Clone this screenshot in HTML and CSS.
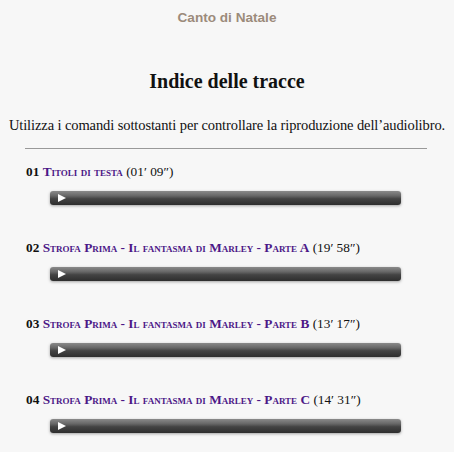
FILE: index.html
```html
<!DOCTYPE html>
<html lang="it">
<head>
<meta charset="utf-8">
<title>Canto di Natale</title>
<link rel="stylesheet" href="styles.css">
</head>
<body>
<header class="topbar">Canto di Natale</header>
<main class="content">
  <h1 class="title">Indice delle tracce</h1>
  <p class="intro">Utilizza i comandi sottostanti per controllare la riproduzione dell’audiolibro.</p>
  <hr class="rule">
  <ul class="tracks">
    <li class="track">
      <p class="track-label"><b>01</b> <span class="track-name">Titoli di testa</span> (01′ 09″)</p>
      <div class="player"><span class="play"></span></div>
    </li>
    <li class="track">
      <p class="track-label"><b>02</b> <span class="track-name">Strofa Prima - Il fantasma di Marley - Parte A</span> (19′ 58″)</p>
      <div class="player"><span class="play"></span></div>
    </li>
    <li class="track">
      <p class="track-label"><b>03</b> <span class="track-name">Strofa Prima - Il fantasma di Marley - Parte B</span> (13′ 17″)</p>
      <div class="player"><span class="play"></span></div>
    </li>
    <li class="track">
      <p class="track-label"><b>04</b> <span class="track-name">Strofa Prima - Il fantasma di Marley - Parte C</span> (14′ 31″)</p>
      <div class="player"><span class="play"></span></div>
    </li>
  </ul>
</main>
</body>
</html>
```
FILE: styles.css
```css
html, body {
  margin: 0;
  padding: 0;
  background: #f7f7f7;
}
body {
  font-family: "Liberation Serif", "DejaVu Serif", serif;
  color: #111;
}
.topbar {
  font-family: "Liberation Sans", Arial, sans-serif;
  font-weight: bold;
  font-size: 13.6px;
  color: #9c8b7b;
  text-align: center;
  padding-top: 9px;
  height: 26px;
  line-height: 17px;
}
.content {
  padding: 0;
}
.title {
  margin: 34px 0 0;
  font-size: 20px;
  font-weight: bold;
  text-align: center;
  line-height: 24px;
}
.intro {
  margin: 23px 0 0;
  font-size: 14.5px;
  letter-spacing: -0.1px;
  line-height: 18px;
  text-align: center;
  white-space: nowrap;
}
.rule {
  margin: 14px 27px 0 25px;
  border: 0;
  border-top: 1px solid #999;
  height: 0;
}
.tracks {
  list-style: none;
  margin: 0;
  padding: 15px 0 0 26px;
}
.track {
  height: 76px;
}
.track-label {
  margin: 0;
  font-size: 13.3px;
  line-height: 16px;
}
.track-name {
  font-variant: small-caps;
  font-weight: bold;
  color: #4c1787;
}
.player {
  margin: 11px 0 0 24px;
  width: 351px;
  height: 14px;
  border-radius: 3px;
  background: linear-gradient(#8a8a8a 0%, #666 35%, #444 55%, #2e2e2e 100%);
  box-shadow: 0 1px 3px rgba(0,0,0,0.35);
  position: relative;
}
.play {
  position: absolute;
  left: 8px;
  top: 3px;
  width: 0;
  height: 0;
  border-top: 4px solid transparent;
  border-bottom: 4px solid transparent;
  border-left: 8px solid #fff;
}
```
